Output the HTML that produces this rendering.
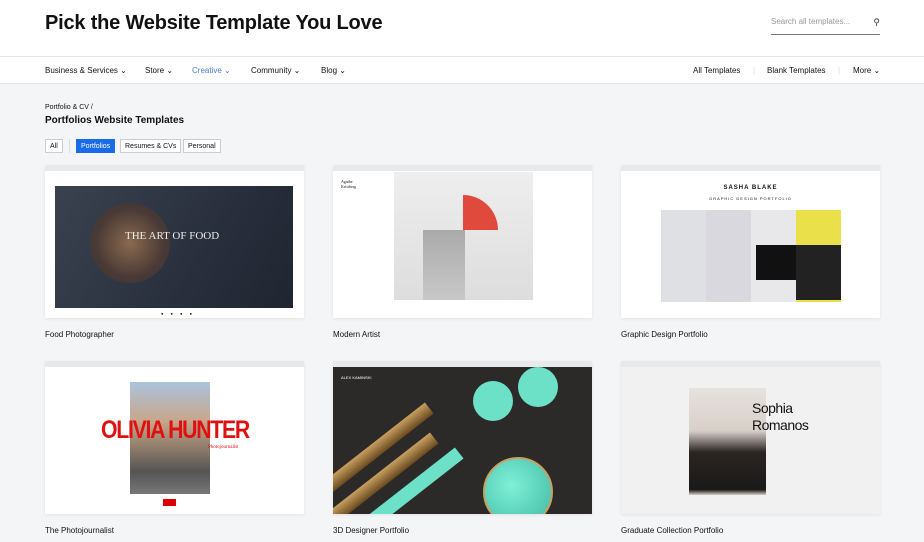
<!DOCTYPE html>
<html><head><meta charset="utf-8"><style>
*{margin:0;padding:0;box-sizing:border-box}
body{width:924px;height:542px;overflow:hidden;background:#f4f5f7;font-family:"Liberation Sans",sans-serif;color:#111;position:relative}
.hdr{position:absolute;left:0;top:0;width:924px;height:57px;background:#fff;border-bottom:1px solid #e6e7ea}
.h1{position:absolute;left:45px;top:12px;font-size:20px;font-weight:bold;letter-spacing:-0.2px}
.search{position:absolute;left:771px;top:17px;width:109px;height:18px;border-bottom:1px solid #777;font-size:8px;color:#999}
.nav{position:absolute;left:0;top:57px;width:924px;height:27px;background:#fff;border-bottom:1px solid #e4e5e8;font-size:8px}
.nav span{position:absolute;top:9px}
.crumb{position:absolute;left:45px;top:104px;font-size:7px}
.h2{position:absolute;left:45px;top:115px;font-size:10px;font-weight:bold}
.chip{position:absolute;top:139px;height:14px;font-size:7px;border:1px solid #ccc;background:#fff;padding:3px 4px;line-height:7px}
.card{position:absolute;width:259px;background:#fff;box-shadow:0 1px 3px rgba(0,0,0,.08);overflow:hidden}
.card .bar{height:6px;background:#e8e9eb}
.lbl{position:absolute;font-size:8px}
</style></head><body>
<div class="hdr"><div class="h1">Pick the Website Template You Love</div>
<div class="search">Search all templates...<span style="position:absolute;right:0;top:0;color:#333;font-size:9px">&#9906;</span></div></div>
<div class="nav">
<span style="left:45px">Business &amp; Services ⌄</span>
<span style="left:145px">Store ⌄</span>
<span style="left:192px;color:#4a7ecf">Creative ⌄</span>
<span style="left:251px">Community ⌄</span>
<span style="left:321px">Blog ⌄</span>
<span style="left:693px">All Templates</span>
<span style="left:753px;color:#ddd">|</span>
<span style="left:767px">Blank Templates</span>
<span style="left:838px;color:#ddd">|</span>
<span style="left:853px">More ⌄</span>
</div>
<div class="crumb">Portfolio &amp; CV /</div>
<div class="h2">Portfolios Website Templates</div>
<div class="chip" style="left:45px">All</div>
<div style="position:absolute;left:69px;top:139px;width:1px;height:14px;background:#ddd"></div>
<div class="chip" style="left:76px;background:#1a6be8;color:#fff;border-color:#1a6be8">Portfolios</div>
<div class="chip" style="left:120px">Resumes &amp; CVs</div>
<div class="chip" style="left:183px">Personal</div>

<!-- row 1 -->
<div class="card" style="left:45px;top:165px;height:153px"><div class="bar"></div>
<div style="position:absolute;left:10px;top:21px;width:238px;height:122px;background:linear-gradient(120deg,#3a4250,#2b3240 50%,#1f2530)"></div>
<div style="position:absolute;left:45px;top:38px;width:80px;height:80px;border-radius:50%;background:radial-gradient(#8a6a50,#4a3a35 60%,#30353f)"></div>
<div style="position:absolute;left:80px;top:65px;color:#eee;font-family:'Liberation Serif',serif;font-size:11px">THE ART OF FOOD</div>
<div style="position:absolute;left:116px;top:146px;font-size:4px;letter-spacing:3px">● ● ● ●</div></div>
<div class="card" style="left:333px;top:165px;height:153px"><div class="bar"></div>
<div style="position:absolute;left:61px;top:7px;width:139px;height:128px;background:linear-gradient(#eee,#ddd)"></div>
<div style="position:absolute;left:95px;top:30px;width:70px;height:70px;border-radius:50%;background:conic-gradient(from 0deg,#e04a3c 0 90deg,transparent 90deg);clip-path:inset(0 0 50% 50%)"></div>
<div style="position:absolute;left:90px;top:65px;width:42px;height:70px;background:linear-gradient(#aaa,#c8c8c8)"></div>
<div style="position:absolute;left:8px;top:14px;font-size:4px;font-family:'Liberation Serif',serif">Agathe<br>Kristberg</div></div>
<div class="card" style="left:621px;top:165px;height:153px"><div class="bar"></div>
<div style="position:absolute;top:20px;width:259px;text-align:center;font-size:6px;font-weight:bold;letter-spacing:1px">SASHA BLAKE</div>
<div style="position:absolute;top:31px;width:259px;text-align:center;font-size:4px;letter-spacing:1px">GRAPHIC DESIGN PORTFOLIO</div>
<div style="position:absolute;left:40px;top:45px;width:180px;height:92px;background:linear-gradient(90deg,#dfe0e3 0 25%,#d8d8de 25% 50%,#e8e8ea 50% 75%,#e9e04a 75%)"></div>
<div style="position:absolute;left:175px;top:80px;width:45px;height:55px;background:#222"></div>
<div style="position:absolute;left:135px;top:80px;width:40px;height:35px;background:#111"></div></div>
<div class="lbl" style="left:45px;top:330px">Food Photographer</div>
<div class="lbl" style="left:333px;top:330px">Modern Artist</div>
<div class="lbl" style="left:621px;top:330px">Graphic Design Portfolio</div>

<!-- row 2 -->
<div class="card" style="left:45px;top:361px;height:153px"><div class="bar"></div>
<div style="position:absolute;left:85px;top:21px;width:80px;height:112px;background:linear-gradient(#a9c4dc,#c8a68a 35%,#8b7a68 60%,#555 80%,#777)"></div>
<div style="position:absolute;left:25px;top:55px;width:210px;text-align:center;color:#e01010;font-weight:bold;font-size:25px;letter-spacing:-1.5px;white-space:nowrap;transform:scaleX(.85)">OLIVIA HUNTER</div>
<div style="position:absolute;left:163px;top:84px;color:#e01010;font-size:5px;font-family:'Liberation Serif',serif">Photojournalist</div>
<div style="position:absolute;left:118px;top:138px;width:13px;height:7px;background:#d00"></div></div>
<div class="card" style="left:333px;top:361px;height:153px"><div class="bar"></div>
<div style="position:absolute;left:0;top:6px;width:259px;height:147px;background:#2b2a28"></div>
<div style="position:absolute;left:-20px;top:80px;width:130px;height:14px;background:linear-gradient(#c9a060,#6a4a20);transform:rotate(-38deg)"></div>
<div style="position:absolute;left:-15px;top:110px;width:130px;height:14px;background:linear-gradient(#c9a060,#6a4a20);transform:rotate(-38deg)"></div>
<div style="position:absolute;left:10px;top:125px;width:130px;height:14px;background:#6de0c8;transform:rotate(-38deg)"></div>
<div style="position:absolute;left:150px;top:96px;width:70px;height:70px;border-radius:50%;background:radial-gradient(circle at 40% 40%,#7ff0d8,#3fb8a0);border:2px solid #c9a060"></div>
<div style="position:absolute;left:140px;top:20px;width:40px;height:40px;border-radius:50%;background:#6de0c8"></div>
<div style="position:absolute;left:185px;top:6px;width:40px;height:40px;border-radius:50%;background:#6de0c8"></div>
<div style="position:absolute;left:8px;top:14px;color:#fff;font-size:4px">ALEX KAMINSKI</div></div>
<div class="card" style="left:621px;top:361px;height:153px"><div class="bar"></div>
<div style="position:absolute;left:0;top:6px;width:259px;height:147px;background:#f1f1f1"></div>
<div style="position:absolute;left:68px;top:27px;width:77px;height:107px;background:linear-gradient(#e6e2de,#d8d0c8 40%,#2a2522 60%,#1a1a1a 95%,#d8d0c8)"></div>
<div style="position:absolute;left:131px;top:39px;font-size:14px;line-height:17px;letter-spacing:-0.5px">Sophia<br>Romanos</div></div>
<div class="lbl" style="left:45px;top:526px">The Photojournalist</div>
<div class="lbl" style="left:333px;top:526px">3D Designer Portfolio</div>
<div class="lbl" style="left:621px;top:526px">Graduate Collection Portfolio</div>
</body></html>
